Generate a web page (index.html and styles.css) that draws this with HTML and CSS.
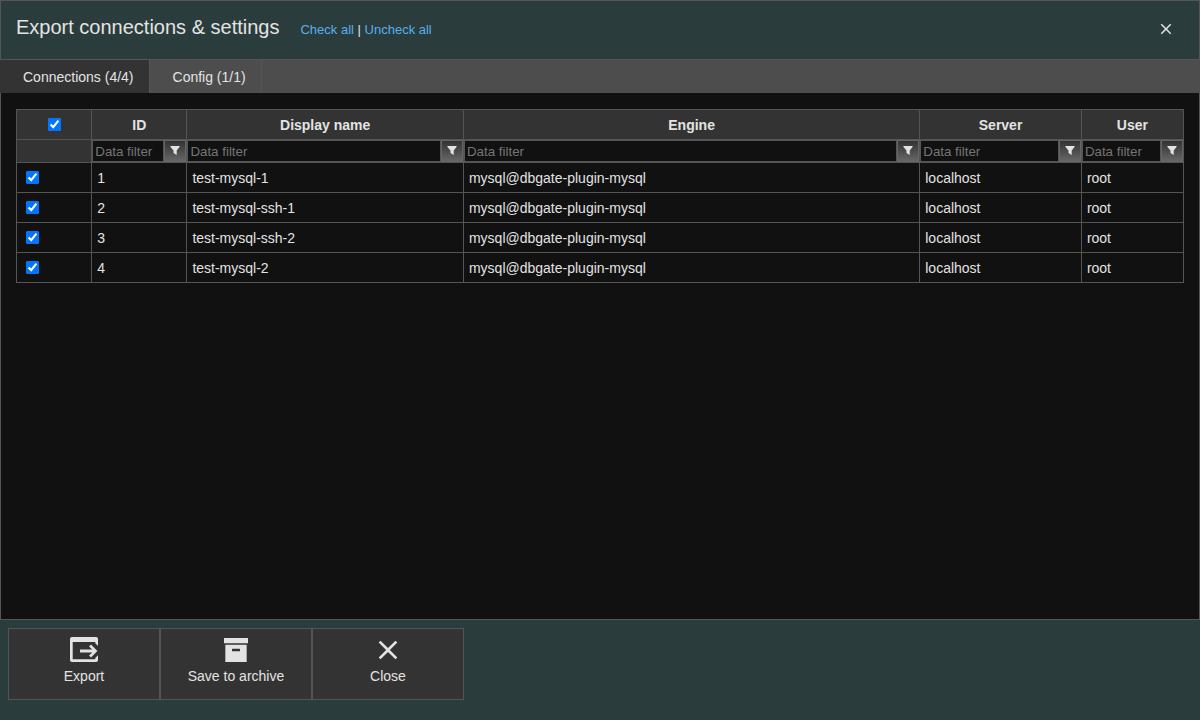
FILE: index.html
```html
<!DOCTYPE html>
<html lang="en">
<head>
    <meta charset="UTF-8">
    <meta name="viewport" content="width=device-width, initial-scale=1.0">
    <title>Export connections &amp; settings</title>
    <link rel="stylesheet" href="styles.css">
</head>
<body>
    <svg class="symbols" aria-hidden="true">
        <symbol id="icon-filter" viewBox="0 0 14 14">
            <path d="M2.500 2H11.500V3L8.700 6.500V11L5.500 9V6.500L2.500 3Z"/>
        </symbol>
        <symbol id="icon-close" viewBox="0 0 24 24">
            <path d="M19,6.41L17.59,5L12,10.59L6.41,5L5,6.41L10.59,12L5,17.59L6.41,19L12,13.41L17.59,19L19,17.59L13.41,12L19,6.41Z"/>
        </symbol>
    </svg>

    <div class="dialog">
        <header class="header">
            <h1 class="title">Export connections &amp; settings</h1>
            <div class="links"><a href="#" id="checkAll">Check all</a> | <a href="#" id="uncheckAll">Uncheck all</a></div>
            <button class="close" type="button" aria-label="Close dialog">
                <svg><use href="#icon-close"/></svg>
            </button>
        </header>

        <nav class="tabs">
            <button class="tab active" type="button">Connections (4/4)</button>
            <button class="tab" type="button">Config (1/1)</button>
        </nav>

        <main class="content">
            <table class="connections">
                <colgroup>
                    <col class="col-check">
                    <col class="col-id">
                    <col class="col-name">
                    <col class="col-engine">
                    <col class="col-server">
                    <col class="col-user">
                </colgroup>
                <thead>
                    <tr>
                        <th><input type="checkbox" aria-label="Select all" checked></th>
                        <th>ID</th>
                        <th>Display name</th>
                        <th>Engine</th>
                        <th>Server</th>
                        <th>User</th>
                    </tr>
                    <tr class="filters">
                        <td></td>
                        <td><div class="filter"><input type="text" placeholder="Data filter" aria-label="Filter ID"><button type="button" aria-label="ID filter menu"><svg><use href="#icon-filter"/></svg></button></div></td>
                        <td><div class="filter"><input type="text" placeholder="Data filter" aria-label="Filter display name"><button type="button" aria-label="Display name filter menu"><svg><use href="#icon-filter"/></svg></button></div></td>
                        <td><div class="filter"><input type="text" placeholder="Data filter" aria-label="Filter engine"><button type="button" aria-label="Engine filter menu"><svg><use href="#icon-filter"/></svg></button></div></td>
                        <td><div class="filter"><input type="text" placeholder="Data filter" aria-label="Filter server"><button type="button" aria-label="Server filter menu"><svg><use href="#icon-filter"/></svg></button></div></td>
                        <td><div class="filter"><input type="text" placeholder="Data filter" aria-label="Filter user"><button type="button" aria-label="User filter menu"><svg><use href="#icon-filter"/></svg></button></div></td>
                    </tr>
                </thead>
                <tbody>
                    <tr>
                        <td><input type="checkbox" aria-label="Select test-mysql-1" checked></td>
                        <td>1</td>
                        <td>test-mysql-1</td>
                        <td>mysql@dbgate-plugin-mysql</td>
                        <td>localhost</td>
                        <td>root</td>
                    </tr>
                    <tr>
                        <td><input type="checkbox" aria-label="Select test-mysql-ssh-1" checked></td>
                        <td>2</td>
                        <td>test-mysql-ssh-1</td>
                        <td>mysql@dbgate-plugin-mysql</td>
                        <td>localhost</td>
                        <td>root</td>
                    </tr>
                    <tr>
                        <td><input type="checkbox" aria-label="Select test-mysql-ssh-2" checked></td>
                        <td>3</td>
                        <td>test-mysql-ssh-2</td>
                        <td>mysql@dbgate-plugin-mysql</td>
                        <td>localhost</td>
                        <td>root</td>
                    </tr>
                    <tr>
                        <td><input type="checkbox" aria-label="Select test-mysql-2" checked></td>
                        <td>4</td>
                        <td>test-mysql-2</td>
                        <td>mysql@dbgate-plugin-mysql</td>
                        <td>localhost</td>
                        <td>root</td>
                    </tr>
                </tbody>
            </table>
        </main>

        <footer class="footer">
            <button class="large-button" type="button">
                <svg viewBox="0 0 32 32">
                    <path d="M4 3H28Q30 3 30 5V12L27.300 9.300V8H4.700V25.300H27.300V24L30 21.300V26Q30 28 28 28H4Q2 28 2 26V5Q2 3 4 3Z"/>
                    <path d="M12 15.500H24.300L21 12.500L23 10.500L29.400 17L23 23.500L21 21.500L24.300 18.500H12Z"/>
                </svg>
                Export
            </button>
            <button class="large-button" type="button">
                <svg viewBox="0 0 24 24">
                    <path d="M3,3H21V7H3V3M4,8H20V21H4V8M9.500,11A0.500,0.500 0 0,0 9,11.500V13H15V11.500A0.500,0.500 0 0,0 14.500,11H9.500Z"/>
                </svg>
                Save to archive
            </button>
            <button class="large-button" type="button">
                <svg><use href="#icon-close"/></svg>
                Close
            </button>
        </footer>
    </div>

    <script>
        const boxes = document.querySelectorAll('.connections input[type="checkbox"]');

        function setAll(checked) {
            boxes.forEach(box => {
                box.checked = checked;
            });
            updateCount();
        }

        function updateCount() {
            const rows = document.querySelectorAll('tbody input[type="checkbox"]');
            const selected = document.querySelectorAll('tbody input[type="checkbox"]:checked');
            document.querySelector('.tab.active').textContent = `Connections (${selected.length}/${rows.length})`;
            boxes[0].checked = selected.length === rows.length;
        }

        document.getElementById('checkAll').onclick = () => setAll(true);
        document.getElementById('uncheckAll').onclick = () => setAll(false);
        boxes[0].onchange = () => setAll(boxes[0].checked);
        document.querySelector('tbody').onchange = updateCount;
    </script>
</body>
</html>
```

FILE: styles.css
```css
* {
    box-sizing: border-box;
}
body {
    margin: 0;
    background: #111;
    color: #e3e3e3;
    font-family: "Liberation Sans", Arial, sans-serif;
    font-size: 14px;
}
button {
    font: inherit;
    color: inherit;
    cursor: pointer;
}
svg {
    fill: currentColor;
    display: block;
}
.symbols {
    display: none;
}
.dialog {
    min-height: 100vh;
    display: flex;
    flex-direction: column;
}
.header {
    display: flex;
    align-items: center;
    height: 60px;
    padding: 0 24px 2px 15px;
    background: #2b3c3c;
    border: 1px solid #555;
}
.title {
    margin: 0;
    padding-bottom: 4px;
    font-size: 20px;
    font-weight: normal;
}
.links {
    margin-left: 21px;
    font-size: 13px;
}
.links a {
    color: #57b0ee;
    text-decoration: none;
}
.links a:hover {
    text-decoration: underline;
}
.close {
    margin-left: auto;
    padding: 0;
    background: none;
    border: none;
}
.close svg {
    width: 18px;
    height: 18px;
}
.tabs {
    display: flex;
    height: 33px;
    background: #4d4d4d;
}
.tab {
    padding: 0 15px 0 23px;
    background: none;
    border: none;
    border-right: 1px solid #555;
}
.tab.active {
    background: #333;
}
.content {
    flex: 1;
    padding: 16px 15px;
    border: 1px solid #555;
    border-top: none;
}
.connections {
    width: 100%;
    table-layout: fixed;
    border-collapse: collapse;
}
.col-check {
    width: 6.45%;
}
.col-id {
    width: 8.15%;
}
.col-name {
    width: 23.7%;
}
.col-engine {
    width: 39.1%;
}
.col-server {
    width: 13.85%;
}
.connections th,
.connections td {
    height: 30px;
    padding: 0 5px;
    border: 1px solid #555;
}
.connections thead {
    background: #333;
}
.connections .filters td {
    height: 23px;
    padding: 0;
}
.connections input[type="checkbox"] {
    display: block;
    margin: 0 4px;
}
.connections th input[type="checkbox"] {
    margin: 0 auto;
}
.filter {
    display: flex;
    height: 22px;
}
.filter input {
    flex: 1;
    min-width: 0;
    padding: 1px 2px;
    background: #111;
    color: #e3e3e3;
    border: 1px solid #555;
    font-family: inherit;
}
.filter input::placeholder {
    color: #757575;
}
.filter button {
    width: 22px;
    padding: 3px;
    background: linear-gradient(#333, #666);
    border: 1px solid #666;
}
.filter svg {
    width: 14px;
    height: 14px;
}
.footer {
    display: flex;
    height: 100px;
    padding: 8px;
    background: #2b3c3c;
}
.large-button {
    display: flex;
    flex-direction: column;
    align-items: center;
    gap: 2px;
    width: 152px;
    height: 72px;
    padding: 5px 0;
    background: #333;
    border: 1px solid #555;
}
.large-button svg {
    width: 32px;
    height: 32px;
}
.large-button:hover {
    background: #444;
}
```
